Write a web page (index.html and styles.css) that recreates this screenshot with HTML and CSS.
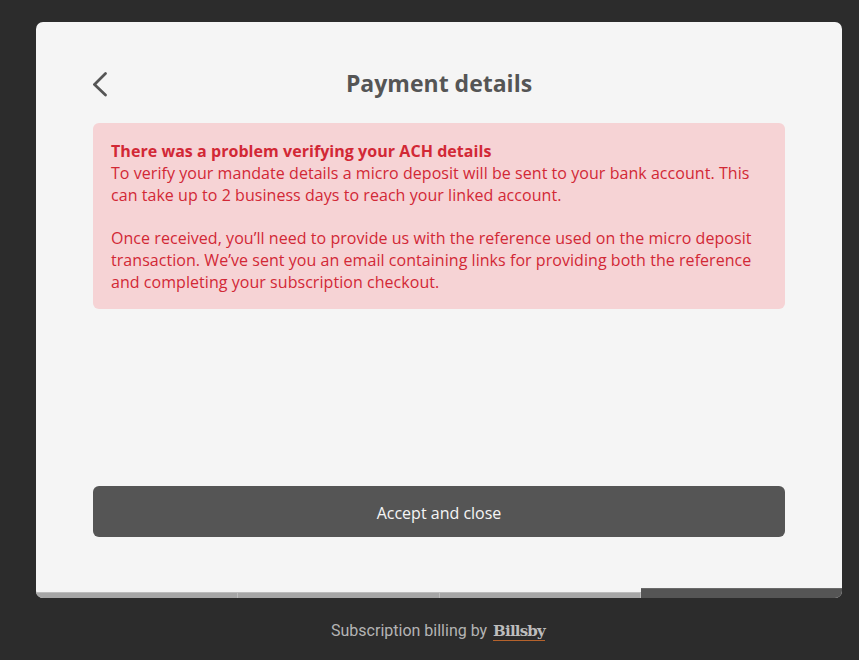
FILE: index.html
```html
<!DOCTYPE html>
<html lang="en">
<head>
    <meta charset="UTF-8">
    <meta name="viewport" content="width=device-width, initial-scale=1.0">
    <title>Payment details</title>
    <link rel="stylesheet" href="styles.css">
</head>
<body>
    <div class="container">
        <div class="card">
            <div class="card-body">
                <div class="header">
                    <svg class="back" width="16" height="26" viewBox="0 0 16 26" fill="none">
                        <path d="M12.5 2.5 L1.5 13.5 L12.5 24" stroke="#555" stroke-width="2.7" stroke-linecap="round" stroke-linejoin="miter"/>
                    </svg>
                    <h1>Payment details</h1>
                </div>
                <div class="alert">
                    <strong>There was a problem verifying your ACH details</strong>
                    <p>To verify your mandate details a micro deposit will be sent to your bank account. This can take up to 2 business days to reach your linked account.</p>
                    <p class="spaced">Once received, you’ll need to provide us with the reference used on the micro deposit transaction. We’ve sent you an email containing links for providing both the reference and completing your subscription checkout.</p>
                </div>
                <button class="accept" type="button">Accept and close</button>
            </div>
            <div class="progress">
                <span class="step"></span>
                <span class="step"></span>
                <span class="step"></span>
                <span class="step current"></span>
            </div>
        </div>
        <p class="footer">Subscription billing by <span class="brand">Billsby</span></p>
    </div>
</body>
</html>
```

FILE: styles.css
```css
* {
    margin: 0;
    padding: 0;
    box-sizing: border-box;
}

html, body {
    height: 100%;
}

body {
    font-family: "Open Sans", sans-serif;
    background-color: #2c2c2c;
    overflow: hidden;
}

.container {
    width: 806px;
    margin: 22px 0 0 36px;
}

/* Card */
.card {
    height: 576px;
    background-color: #f5f5f5;
    border-radius: 7px;
    overflow: hidden;
    display: flex;
    flex-direction: column;
}

.card-body {
    flex: 1;
    display: flex;
    flex-direction: column;
    padding: 44px 57px 51px;
}

.header {
    position: relative;
    height: 34px;
    display: flex;
    align-items: center;
    justify-content: center;
    margin-bottom: 23px;
}

.back {
    position: absolute;
    left: 0;
    top: 5px;
}

h1 {
    font-size: 23px;
    line-height: 34px;
    font-weight: 700;
    color: #555;
}

/* Alert */
.alert {
    height: 186px;
    background-color: #f6d3d5;
    color: #d22835;
    border-radius: 6px;
    padding: 17px 18px 0;
    font-size: 16px;
    line-height: 22px;
    letter-spacing: 0.05px;
}

.alert strong {
    display: block;
    font-weight: 700;
}

.spaced {
    margin-top: 21px;
}

.accept {
    margin-top: auto;
    height: 51px;
    border: none;
    border-radius: 6px;
    padding-top: 2px;
    background-color: #555;
    color: #f5f5f5;
    font-family: inherit;
    font-size: 16px;
}

/* Progress bar along the card's bottom edge */
.progress {
    height: 10px;
    display: flex;
    align-items: flex-end;
}

.step {
    flex: 1;
    height: 6px;
    background-color: #a6a6a6;
    border-top: 1px solid #bcbcbc;
    border-right: 1px solid #bcbcbc;
}

.step.current {
    height: 10px;
    background-color: #555;
    border-right: none;
    border-top-color: #6a6a6a;
}

/* Footer */
.footer {
    margin-top: 22px;
    padding-right: 2px;
    text-align: center;
    font-family: Roboto, sans-serif;
    font-size: 16px;
    line-height: 22px;
    color: #b4b4b4;
}

.brand {
    margin-left: 2px;
    font-family: "DejaVu Serif", serif;
    font-weight: 700;
    font-size: 15px;
    letter-spacing: -0.8px;
    color: #bdbdbd;
    border-bottom: 1px solid #b5622c;
}
```
